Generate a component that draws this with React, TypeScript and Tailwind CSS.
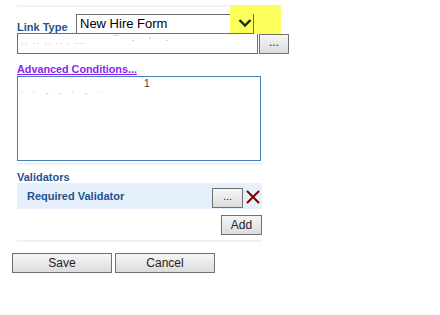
import React from "react";

const btn =
  "border border-[#707070] bg-gradient-to-b from-[#f6f6f6] to-[#dcdcdc] text-[12px] text-[#222] leading-none flex items-center justify-center";

export default function App() {
  return (
    <div
      className="relative w-[440px] h-[315px] bg-white overflow-hidden"
      style={{ fontFamily: '"Liberation Sans", Arial, sans-serif' }}
    >
      <div className="ml-[17px] w-[245px] pt-[5px]">
        <div className="h-[2px] bg-[#eef3fa]" />
        <div className="mt-[7px] flex items-center h-[20px]">
          <div className="w-[59px] text-[11px] font-bold text-[#24528f] pt-[7px]">Link Type</div>
          <div className="w-[178px] h-[20px] border border-[#6e6e6e] bg-white flex items-center pl-[3px] text-[13px] text-black">
            New Hire Form
          </div>
        </div>
        <div className="-mt-[1px] flex items-start">
          <div className="shrink-0 w-[241px] h-[21px] border border-[#6e6e6e] bg-white relative">
            <span className="absolute left-[3px] top-[5px] text-[9px] leading-none text-[#b8b8b8] tracking-[1px]">
              ·· ·· ·· ·· · ···
            </span>
            <span className="absolute left-[96px] top-[2px] text-[9px] leading-none text-[#aaa] tracking-[6px]">
              ‾ · ' ·
            </span>
          </div>
          <div className={`shrink-0 ml-[1px] mt-[1px] w-[30px] h-[20px] ${btn}`}>
            <span className="-mt-[4px]">...</span>
          </div>
        </div>
        <div className="mt-[7px] h-[14px] leading-[14px]">
          <span className="text-[10.8px] font-bold text-[#8a1ff0] underline">Advanced Conditions...</span>
        </div>
        <div className="mt-[1px] w-[244px] h-[85px] border border-[#4a7fb5] bg-white relative">
          <span className="absolute left-[126px] top-[2px] text-[10px] leading-none text-[#333]">1</span>
          <span className="absolute left-[2px] top-[12px] text-[8px] leading-none text-[#aaa] tracking-[4px]">
            · ·  ‐ ‐  · ‐ ·
          </span>
        </div>
        <div className="mt-[2px] h-[2px] bg-[#eef3fa]" />
        <div className="mt-[5px] h-[13px] leading-[14px] text-[11px] font-bold text-[#24528f]">Validators</div>
        <div className="h-[26px] bg-[#e5f0fc] flex items-center pl-[10px]">
          <div className="flex-1 text-[11px] font-bold text-[#24528f]">Required Validator</div>
          <div className={`mt-[4px] w-[31px] h-[20px] ${btn}`}>
            <span className="-mt-[3px] text-[11px]">...</span>
          </div>
          <svg width="16" height="16" viewBox="0 0 16 16" className="ml-[2px] mr-[1px] mt-[2px]">
            <path d="M2.5 2.5 L13.5 13.5 M13.5 2.5 L2.5 13.5" stroke="#7a0000" strokeWidth="2" strokeLinecap="round" />
          </svg>
        </div>
        <div className="mt-[6px] flex justify-end">
          <div className={`w-[41px] h-[20px] ${btn}`}>Add</div>
        </div>
        <div className="mt-[5px] h-[2px] bg-[#eef3fa]" />
      </div>
      <div className="ml-[12px] mt-[11px] flex gap-[3px]">
        <div className={`w-[100px] h-[20px] ${btn}`}>Save</div>
        <div className={`w-[100px] h-[20px] ${btn}`}>Cancel</div>
      </div>
      <div className="absolute left-[230px] top-[5px] w-[51px] h-[29px] bg-[#fdfd5c]">
        <div className="absolute left-0 top-[9px] w-[24px] h-[20px] border-r border-b border-[#6e6e6e]" />
        <svg width="14" height="10" viewBox="0 0 14 10" className="absolute left-[8px] top-[13px]">
          <path d="M1.5 2 L7 7.5 L12.5 2" fill="none" stroke="#1e2a10" strokeWidth="2.4" />
        </svg>
      </div>
    </div>
  );
}
